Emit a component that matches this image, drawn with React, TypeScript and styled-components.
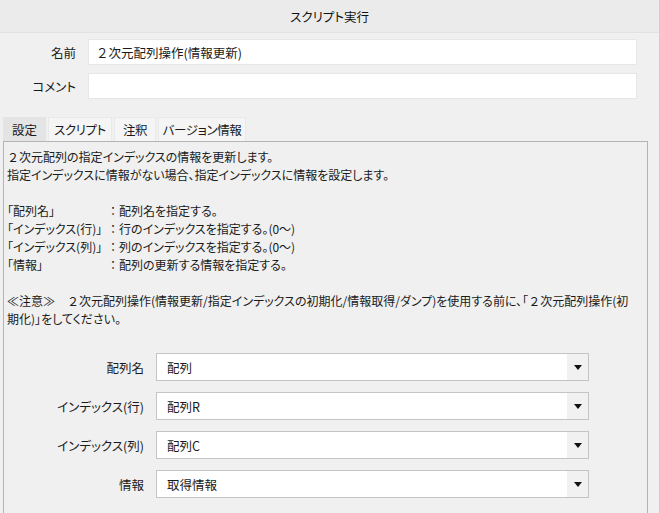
import React from 'react';
import styled, { createGlobalStyle } from 'styled-components';

const GlobalStyle = createGlobalStyle`
  html, body {
    margin: 0;
    padding: 0;
    background: #f0f0f0;
  }
  body {
    font-family: "Noto Sans CJK JP", "Liberation Sans", sans-serif;
    font-size: 12px;
    color: #1a1a1a;
    font-feature-settings: "palt";
  }
`;

const Window = styled.div`
  width: 660px;
  height: 513px;
  box-sizing: border-box;
  border-right: 1px solid #cfcfcf;
  background: #f0f0f0;
  overflow: hidden;
  display: flex;
  flex-direction: column;
`;

const Header = styled.div`
  height: 33px;
  flex: none;
  display: flex;
  align-items: center;
  justify-content: center;
  background: #ebebeb;
  border-bottom: 1px solid #e2e2e2;
  box-sizing: border-box;
  font-size: 12.5px;
  color: #111;
`;

// full-width glyph keeps its own width (no proportional squeeze)
const Wide = styled.span`
  font-feature-settings: normal;
`;

const Form = styled.div`
  display: grid;
  grid-template-columns: 76px 1fr;
  column-gap: 12px;
  row-gap: 8px;
  padding: 6px 22px 0 0;
`;

const Label = styled.div`
  text-align: right;
  align-self: center;
  font-size: 12.5px;
`;

const TextBox = styled.div`
  height: 26px;
  box-sizing: border-box;
  background: #fff;
  border: 1px solid #e6e6e6;
  padding: 0 7px;
  display: flex;
  align-items: center;
  font-size: 12.5px;
  white-space: pre;
`;

const Tabs = styled.div`
  display: flex;
  gap: 2px;
  margin: 18px 0 0 3px;
  height: 24px;
`;

const Tab = styled.div<{ $active?: boolean; $w: number }>`
  box-sizing: border-box;
  width: ${({ $w }) => $w}px;
  height: 24px;
  display: flex;
  align-items: center;
  justify-content: center;
  background: ${({ $active }) => ($active ? '#e4e4e4' : '#f5f5f5')};
  border: 1px solid ${({ $active }) => ($active ? '#e4e4e4' : '#e9e9e9')};
  border-bottom: none;
  font-size: 12.5px;
  letter-spacing: ${({ $active }) => ($active ? '0' : '-0.4px')};
`;

const Panel = styled.div`
  flex: 1;
  margin: 0 11px 0 3px;
  border: 1px solid #b4b4b4;
  border-bottom: none;
  background: #f0f0f0;
  padding: 6px 0 0 3px;
`;

const Desc = styled.div`
  line-height: 18px;
  font-size: 12px;
`;

const Line = styled.div`
  height: 18px;
  white-space: pre;
`;

const ParamLine = styled.div`
  display: flex;
  height: 18px;
  white-space: nowrap;
`;

const ParamName = styled.span`
  min-width: 100px;
`;

const Selects = styled.div`
  display: grid;
  grid-template-columns: 137px 433px;
  column-gap: 12px;
  row-gap: 11px;
  margin-top: 25px;
`;

const SelectLabel = styled.div`
  text-align: right;
  align-self: center;
  font-size: 12.5px;
`;

const SelectBox = styled.div`
  height: 28px;
  box-sizing: border-box;
  background: #fff;
  border: 1px solid #c4c4c4;
  display: flex;
  align-items: stretch;
  font-size: 12.5px;
`;

const SelectValue = styled.div`
  flex: 1;
  display: flex;
  align-items: center;
  padding-left: 10px;
`;

const ArrowCell = styled.div`
  width: 21px;
  background: #f1f1f1;
  display: flex;
  align-items: center;
  justify-content: center;
`;

const Arrow = () => (
  <svg width="8" height="5" viewBox="0 0 8 5">
    <path d="M0 0 H8 L4 5 Z" fill="#111" />
  </svg>
);

const params = [
  ['「配列名」', '配列名を指定する。'],
  ['「インデックス(行)」', '行のインデックスを指定する。(0～)'],
  ['「インデックス(列)」', '列のインデックスを指定する。(0～)'],
  ['「情報」', '配列の更新する情報を指定する。'],
];

const selects = [
  ['配列名', '配列'],
  ['インデックス(行)', '配列R'],
  ['インデックス(列)', '配列C'],
  ['情報', '取得情報'],
];

const tabs: [string, number][] = [
  ['設定', 43],
  ['スクリプト', 64],
  ['注釈', 42],
  ['バージョン情報', 88],
];

export default function App() {
  return (
    <>
      <GlobalStyle />
      <Window>
        <Header>スクリプト実行</Header>
        <Form>
          <Label>名前</Label>
          <TextBox>
            <Wide>２</Wide>次元配列操作(情報更新)
          </TextBox>
          <Label>コメント</Label>
          <TextBox />
        </Form>
        <Tabs>
          {tabs.map(([t, w], i) => (
            <Tab key={t} $w={w} $active={i === 0}>
              {t}
            </Tab>
          ))}
        </Tabs>
        <Panel>
          <Desc>
            <Line>
              <Wide>２</Wide>次元配列の指定インデックスの情報を更新します。
            </Line>
            <Line>指定インデックスに情報がない場合、指定インデックスに情報を設定します。</Line>
            <Line />
            {params.map(([k, v]) => (
              <ParamLine key={k}>
                <ParamName>{k}</ParamName>
                <Wide>：</Wide>
                <span>{v}</span>
              </ParamLine>
            ))}
            <Line />
            <Line>
              ≪注意≫　<Wide>２</Wide>次元配列操作(情報更新/指定インデックスの初期化/情報取得/ダンプ)を使用する前に、「<Wide>２</Wide>次元配列操作(初
            </Line>
            <Line>期化)」をしてください。</Line>
          </Desc>
          <Selects>
            {selects.map(([label, value]) => (
              <React.Fragment key={label}>
                <SelectLabel>{label}</SelectLabel>
                <SelectBox>
                  <SelectValue>{value}</SelectValue>
                  <ArrowCell>
                    <Arrow />
                  </ArrowCell>
                </SelectBox>
              </React.Fragment>
            ))}
          </Selects>
        </Panel>
      </Window>
    </>
  );
}
